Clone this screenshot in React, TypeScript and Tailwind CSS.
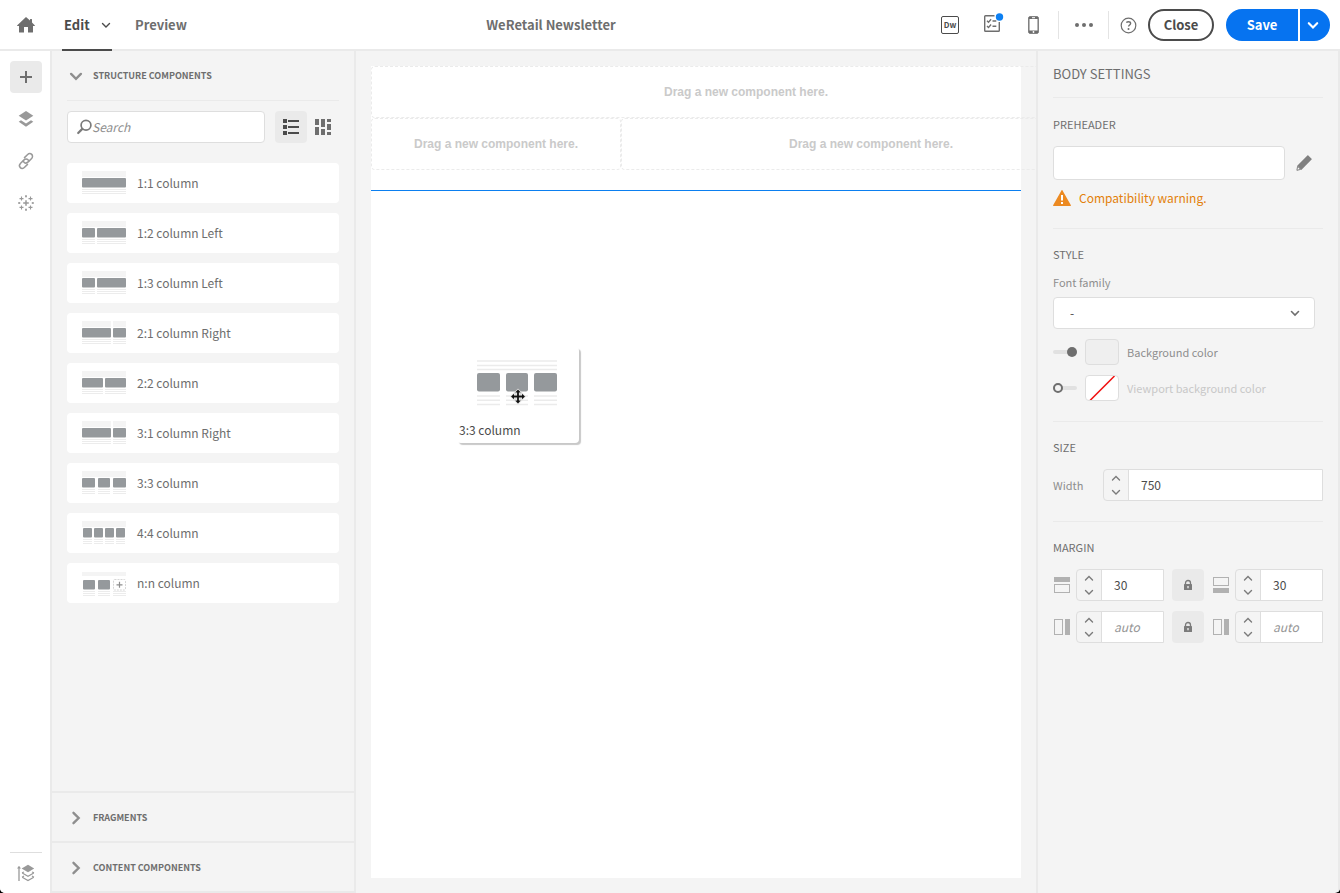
import React, { useState } from "react";

function Chevron({ dir, size = 10, stroke = 2 }: { dir: "up" | "down" | "right"; size?: number; stroke?: number }) {
  const d = { up: "M1.5 7 5 3.5 8.5 7", down: "M1.5 3.5 5 7 8.5 3.5", right: "M3.2 1.3 6.9 5 3.2 8.7" }[dir];
  return (
    <svg width={size} height={size} viewBox="0 0 10 10" fill="none" stroke="currentColor" strokeWidth={stroke} strokeLinecap="round" strokeLinejoin="miter" aria-hidden="true">
      <path d={d} />
    </svg>
  );
}

const HomeIcon = () => (
  <svg width="18" height="16" viewBox="0 0 18 16" fill="#6e6e6e" aria-hidden="true">
    <path d="M9 0 .3 8.2c-.4.4-.2.9.3.9H2V15c0 .4.2.6.6.6H7V10.4c0-.3.2-.4.4-.4h3.200c.3 0 .4.2.4.4v5.200h4.400c.4 0 .6-.2.6-.6V9.100h1.400c.5 0 .7-.5.3-.9L15 5.500V2.600c0-.4-.2-.6-.5-.6h-1c-.3 0-.5.2-.5.6v1z" />
  </svg>
);

const LayersIcon = () => (
  <svg width="16" height="16" viewBox="0 0 16 16" fill="#999" aria-hidden="true">
    <path d="M8 0 15.300 4.700 8 9.600.7 4.700z" />
    <path d="M.7 10.700 3 9.200l5 3.300 5-3.300 2.300 1.500L8 15.800z" />
  </svg>
);

const LinkIcon = () => (
  <svg width="18" height="18" viewBox="0 0 18 18" fill="none" stroke="#999" strokeWidth="1.5" strokeLinecap="round" aria-hidden="true">
    <path d="M7.500 5.600 10.400 2.700c1.400-1.400 3.200-1.400 4.300-.3s1.100 2.900-.3 4.300L11.200 9.900c-1.400 1.400-3.200 1.300-4.200.3-.4-.4-.6-.8-.7-1.300" />
    <path d="M10.500 12.400 7.600 15.300c-1.400 1.400-3.200 1.400-4.300.3s-1.100-2.900.3-4.300L6.800 8.100C8.200 6.700 10 6.800 11 7.800c.4.4.6.8.7 1.300" />
  </svg>
);

const DataIcon = () => (
  <svg width="16" height="16" viewBox="0 0 16 16" fill="none" stroke="#999" strokeWidth="1.1" aria-hidden="true">
    <path d="M8 5.200v5.600M5.200 8h5.600" strokeWidth="1.500" />
    <path d="M3.500 1.600v4M1.500 3.600h4M12.500 1.600v4M10.500 3.600h4M3.500 10.400v4M1.500 12.400h4M12.500 10.400v4M10.500 12.400h4" />
    <path d="M8 0v2.400M7 1.200h2M8 13.600V16M7 14.800h2M0 8h2.400M1.200 7v2M13.600 8H16M14.800 7v2" />
  </svg>
);

const StackIcon = () => (
  <svg width="18" height="18" viewBox="0 0 18 18" aria-hidden="true">
    <path d="M2 3.500V17" fill="none" stroke="#999" strokeWidth="1.300" />
    <path d="M0 4.500 2 1.800l2 2.700z" fill="#999" />
    <path d="M11 .8 17.200 4.600 11 8.300 4.600 4.600z" fill="#999" />
    <path d="m5.200 9 5.800 3.200L16.800 9M5.200 13.200l5.800 3.400 5.800-3.400M5 8.800l2-.8M17 8.800l-2-.8M5 13.200l2-1.200M17 13.200l-2-1.200" fill="none" stroke="#999" strokeWidth="1.200" />
  </svg>
);

const SearchIcon = () => (
  <svg width="16" height="16" viewBox="0 0 16 16" fill="none" stroke="#7b7b7b" className="shrink-0" aria-hidden="true">
    <circle cx="10" cy="6.200" r="4.900" strokeWidth="1.700" />
    <path d="M6.300 9.900 2.200 14" strokeWidth="2.200" strokeLinecap="round" />
  </svg>
);

const ListIcon = () => (
  <svg width="16" height="16" viewBox="0 0 16 16" fill="#4b4b4b" aria-hidden="true">
    <path d="M0 0h4v4H0zM0 6h4v4H0zM0 12h4v4H0zM5 1h11v2H5zM5 7h11v2H5zM5 13h11v2H5z" />
  </svg>
);

const CardsIcon = () => (
  <svg width="16" height="16" viewBox="0 0 16 16" fill="#6e6e6e" aria-hidden="true">
    <path d="M0 0h4v6H0zM0 8h4v8H0zM6 0h4v8H6zM6 10h4v6H6zM12 0h4v3h-4zM12 5h4v6h-4zM12 13h4v3h-4z" />
  </svg>
);

const TasksIcon = () => (
  <svg width="24" height="20" viewBox="0 0 24 20" fill="none" stroke="#6e6e6e" aria-hidden="true">
    <path d="M14.500 2.700H5.500a.8.8 0 0 0-.8.8v14c0 .4.4.8.800.8h13c.4 0 .8-.4.8-.8V9" strokeWidth="1.400" />
    <path d="m7 7.800 1.500 1.500 2.600-3M7 13l1.500 1.500 2.600-3" strokeWidth="1.300" />
    <path d="M12.500 8h3.800M12.500 13.200h3.800" strokeWidth="1.500" />
    <circle cx="19.500" cy="4" r="3.700" fill="#0d80f2" stroke="none" />
  </svg>
);

const PhoneIcon = () => (
  <svg width="12" height="18" viewBox="0 0 12 18" aria-hidden="true">
    <rect x=".7" y=".7" width="9.600" height="16.600" rx="1" fill="#6e6e6e" stroke="#6e6e6e" />
    <rect x="1.500" y="3" width="8" height="11.500" fill="#fff" />
    <rect x="4" y="1.200" width="3" height="1" fill="#fff" />
    <circle cx="5.500" cy="16" r=".9" fill="#fff" />
  </svg>
);

const HelpIcon = () => (
  <svg width="17" height="17" viewBox="0 0 17 17" fill="none" stroke="#6e6e6e" aria-hidden="true">
    <circle cx="8.500" cy="8.500" r="7.300" strokeWidth="1.200" />
    <path d="M6.300 5.500c.6-.5 1.300-.8 2.100-.8 1.400 0 2.200.8 2.200 1.700 0 1.500-2 1.700-2 3.200" strokeWidth="1.400" />
    <circle cx="8.500" cy="11.900" r="1" fill="#6e6e6e" stroke="none" />
  </svg>
);

const PencilIcon = () => (
  <svg width="16" height="16" viewBox="0 0 16 16" aria-hidden="true">
    <path d="M12.300.4 15.600 3.700c.3.300.3.600 0 .9L5.300 14.900 1.200 10.700 11.400.4c.3-.3.6-.3.9 0z" fill="#808080" />
    <path d="M1.600 11.300 4.700 14.400.9 15.300z" fill="#f4f4f4" stroke="#808080" />
  </svg>
);

const WarningIcon = () => (
  <svg width="18" height="16" viewBox="0 0 18 16" aria-hidden="true">
    <path d="M9.400.3 17.900 15.300c.2.400 0 .7-.4.7H.5c-.4 0-.6-.3-.4-.7L8.600.3c.2-.4.600-.4.800 0z" fill="#ec8a22" />
    <path d="M8 5h2v5.500H8zM8 12h2v2H8z" fill="#fff" />
  </svg>
);

const LockIcon = () => (
  <svg width="10" height="12" viewBox="0 0 10 12" aria-hidden="true">
    <path d="M2.500 6V4a2.500 2.500 0 0 1 5 0v2" fill="none" stroke="#7b7b7b" strokeWidth="1.300" />
    <rect x="1" y="5" width="8" height="6" rx=".6" fill="#7b7b7b" />
    <path d="M4.300 7h1.400v2.200H4.300z" fill="#eaeaea" />
  </svg>
);

type Side = "top" | "bottom" | "left" | "right";

function SideIcon({ side }: { side: Side }) {
  const bar = side === "top" ? [0, 1, 16, 5] : side === "bottom" ? [0, 12, 16, 5] : [11, 1, 5, 16];
  const box = side === "top" ? [0.5, 8.5, 15, 8] : side === "bottom" ? [0.5, 1.5, 15, 8] : [0.5, 1.5, 8, 15];
  return (
    <svg width="16" height="18" viewBox="0 0 16 18" aria-hidden="true">
      <rect x={bar[0]} y={bar[1]} width={bar[2]} height={bar[3]} fill="#b1b1b1" />
      <rect x={box[0]} y={box[1]} width={box[2]} height={box[3]} fill="none" stroke="#b1b1b1" />
    </svg>
  );
}

type Block = [number, number];
type Structure = { label: string; blocks: Block[]; bands: Block[]; add?: boolean };

const FULL: Block[] = [[0, 44]];
const structures: Structure[] = [
  { label: "1:1 column", blocks: FULL, bands: FULL },
  { label: "1:2 column Left", blocks: [[0, 13], [15, 29]], bands: FULL },
  { label: "1:3 column Left", blocks: [[0, 13], [15, 29]], bands: FULL },
  { label: "2:1 column Right", blocks: [[0, 29], [31, 13]], bands: [[0, 29], [31, 13]] },
  { label: "2:2 column", blocks: [[0, 21], [23, 21]], bands: FULL },
  { label: "3:1 column Right", blocks: [[0, 29], [31, 13]], bands: [[0, 29], [31, 13]] },
  { label: "3:3 column", blocks: [[0, 13], [16, 12], [31, 13]], bands: FULL },
  { label: "4:4 column", blocks: [[1, 9], [12, 9], [23, 9], [34, 9]], bands: FULL },
  { label: "n:n column", blocks: [[1, 12], [16, 12]], bands: FULL, add: true },
];

function Thumb({ blocks, bands, add }: Structure) {
  const y = add ? 2 : 0;
  const feet: Block[] = add ? [...blocks, [31, 13]] : blocks;
  return (
    <svg width="44" height="26" viewBox="0 0 44 26" className="shrink-0" aria-hidden="true">
      {bands.map(([x, w]) => (
        <rect key={x} x={x} y={1 + y / 2} width={w} height={add ? 4 : 6} fill="#f4f4f4" />
      ))}
      {blocks.map(([x, w]) => (
        <rect key={x} x={x} y={8 + y} width={w} height="9.500" rx="1" fill="#95999c" />
      ))}
      {feet.map(([x, w]) => (
        <g key={x} fill="#ececec">
          <rect x={x} y={19 + y} width={w} height="1" />
          <rect x={x} y={21 + y} width={w} height="1" />
          <rect x={x} y={23 + y} width={w} height="1" />
        </g>
      ))}
      {add && (
        <g fill="none">
          <rect x="31.500" y="9.500" width="12" height="10.500" rx="1" stroke="#d6d6d6" strokeDasharray="2 1" />
          <path d="M37.500 11.800v6M34.500 14.800h6" stroke="#8e8e8e" strokeWidth="1.200" />
        </g>
      )}
    </svg>
  );
}

function CollapsedSection({ title }: { title: string }) {
  return (
    <section className="border-t-2 border-[#eaeaea]">
      <button type="button" aria-expanded="false" className="flex h-12 w-full items-center gap-2.5 pt-0.5 pl-[17px] text-left text-[#8e8e8e]">
        <Chevron dir="right" size={14} stroke={1.7} />
        <span className="text-[9px] leading-4 font-bold text-[#6e6e6e]">{title}</span>
      </button>
    </section>
  );
}

function NumberField({ label, value, placeholder }: { label: string; value?: string; placeholder?: string }) {
  return (
    <div className="flex h-8 min-w-0 flex-1 rounded-l border border-[#dedede] text-[#7b7b7b]">
      <div className="flex w-[25px] shrink-0 flex-col items-center justify-between border-r border-[#dedede] py-[3px]">
        <button type="button" aria-label={`Increase ${label}`}><Chevron dir="up" size={10} stroke={1.4} /></button>
        <button type="button" aria-label={`Decrease ${label}`}><Chevron dir="down" size={10} stroke={1.4} /></button>
      </div>
      <input
        aria-label={label}
        defaultValue={value}
        placeholder={placeholder}
        className="w-full min-w-0 bg-white px-3 text-[12px] leading-5 text-[#4b4b4b] placeholder:text-[#959595] placeholder:italic"
      />
    </div>
  );
}

function LockButton({ label }: { label: string }) {
  return (
    <button type="button" aria-label={label} className="mx-2 flex size-8 shrink-0 items-center justify-center rounded bg-[#eaeaea]">
      <LockIcon />
    </button>
  );
}

function ColorRow({ label, enabled }: { label: string; enabled: boolean }) {
  const [on, setOn] = useState(enabled);
  return (
    <div className="flex h-[26px] items-center">
      <label className="grid">
        <input type="checkbox" role="switch" aria-label={`Enable ${label}`} checked={on} onChange={() => setOn(!on)} className="col-start-1 row-start-1 h-3 w-6 appearance-none" />
        <svg width="24" height="12" viewBox="0 0 24 12" className="pointer-events-none col-start-1 row-start-1" aria-hidden="true">
          <rect y="4" width="24" height="4" rx="2" fill="#e1e1e1" />
          {on ? <circle cx="19" cy="6" r="5" fill="#6e6e6e" /> : <circle cx="5" cy="6" r="4" fill="#f4f4f4" stroke="#6e6e6e" strokeWidth="2" />}
        </svg>
      </label>
      <button type="button" aria-label={`Choose ${label}`} className={`ml-2 h-[26px] w-[34px] overflow-hidden rounded border border-[#dedede] ${enabled ? "bg-[#efefef]" : "bg-white"}`}>
        {!enabled && (
          <svg width="32" height="24" viewBox="0 0 32 24" aria-hidden="true">
            <path d="M4 24.500 28.500 0" stroke="#f01010" strokeWidth="1.500" />
          </svg>
        )}
      </button>
      <span className={`ml-2 text-[11px] leading-4 ${enabled ? "text-[#8e8e8e]" : "text-[#c8c8c8]"}`}>{label}</span>
    </div>
  );
}

function SectionTitle({ children }: { children: React.ReactNode }) {
  return <h3 className="text-[11px] leading-4 text-[#6e6e6e]">{children}</h3>;
}

function Dropzone({ className = "" }: { className?: string }) {
  return (
    <div className={`flex items-center justify-center rounded-sm border border-dashed border-[#ebebeb] font-['Liberation_Sans',sans-serif] text-[12px] leading-5 font-bold text-[#cacaca] ${className}`}>
      Drag a new component here.
    </div>
  );
}

function DragCard() {
  const cols = [[20, 23], [49, 22], [77, 23]];
  return (
    <div className="absolute top-[296px] left-[101px] flex h-[96px] w-[122px] flex-col rounded-sm bg-white shadow-[2px_2px_1px_#c8c8c8]">
      <svg width="122" height="73" viewBox="0 0 122 73" aria-hidden="true">
        <path d="M20 14h80M20 18.500h80M20 22.500h80" stroke="#ebebeb" strokeWidth="1.600" />
        {cols.map(([x, w]) => (
          <g key={x}>
            <rect x={x} y="26" width={w} height="18.500" rx="2" fill="#95999c" />
            <path d={`M${x} 49h${w}M${x} 53.200h${w}M${x} 57.500h${w}`} stroke="#ebebeb" strokeWidth="1.600" />
          </g>
        ))}
        <path d="m61 41.500 8 8-8 8-8-8z" fill="#d8d8d8" />
        <path
          d="m61 42.500 2.800 3h-1.900v3.100H65v-1.900l3 2.800-3 2.800v-1.900h-3.100v3.100h1.900l-2.800 3-2.800-3h1.900v-3.100H57v1.900l-3-2.800 3-2.800v1.900h3.100v-3.100h-1.900z"
          fill="#111"
          stroke="#fff"
          strokeWidth=".8"
          paintOrder="stroke"
        />
      </svg>
      <span className="pl-0.5 text-[12px] leading-5 text-[#4b4b4b]">3:3 column</span>
    </div>
  );
}

function Header() {
  return (
    <header className="flex h-[51px] shrink-0 border-b-2 border-[#eaeaea] bg-white pr-2.5">
      <div className="flex items-center">
        <a href="#home" aria-label="Home" className="flex w-[62px] pl-[17px]"><HomeIcon /></a>
        <nav className="-mb-0.5 flex self-stretch text-[13px] leading-5 font-bold">
          <button type="button" className="flex w-[50px] items-center justify-between border-b-2 border-[#4b4b4b] px-px pl-0.5 text-[#4b4b4b]">
            Edit
            <Chevron dir="down" size={10} stroke={1.4} />
          </button>
          <a href="#preview" className="ml-[23px] flex items-center border-b-2 border-transparent text-[#6e6e6e]">Preview</a>
        </nav>
      </div>
      <h1 className="flex flex-1 items-center justify-center text-[13px] leading-5 font-bold text-[#6e6e6e]">WeRetail Newsletter</h1>
      <div className="flex items-center pl-3.5">
        <button type="button" aria-label="Dreamweaver" className="flex w-[42px] justify-center">
          <span className="flex h-[18px] w-[18px] items-center justify-center rounded-xs border border-[#4b4b4b] text-[8px] leading-3 font-bold text-[#4b4b4b]">Dw</span>
        </button>
        <button type="button" aria-label="Tasks" className="flex w-[42px] justify-center pb-1"><TasksIcon /></button>
        <button type="button" aria-label="Mobile view" className="flex w-[42px] justify-center"><PhoneIcon /></button>
        <button type="button" aria-label="More" className="ml-[3px] flex h-7 w-[51px] items-center justify-center gap-[3px] border-x border-[#e4e4e4]">
          <span className="size-1 rounded-full bg-[#6e6e6e]" />
          <span className="size-1 rounded-full bg-[#6e6e6e]" />
          <span className="size-1 rounded-full bg-[#6e6e6e]" />
        </button>
        <button type="button" aria-label="Help" className="flex w-[39px] justify-center pt-0.5"><HelpIcon /></button>
        <button type="button" className="h-8 w-[66px] rounded-full border-2 border-[#4b4b4b] text-[13px] leading-5 font-bold text-[#4b4b4b]">Close</button>
        <button type="button" className="ml-3 h-8 w-[72px] rounded-l-full bg-[#0673f0] text-[13px] leading-5 font-bold text-white">Save</button>
        <button type="button" aria-label="More save options" className="ml-0.5 flex h-8 w-[30px] items-center rounded-r-full bg-[#0673f0] pl-[7px] text-white">
          <Chevron dir="down" size={12} stroke={1.8} />
        </button>
      </div>
    </header>
  );
}

function Rail() {
  return (
    <nav aria-label="Panels" className="flex w-[52px] shrink-0 flex-col items-start gap-2.5 border-r-2 border-[#eaeaea] bg-white pt-2.5 pl-2.5">
      <button type="button" aria-label="Components" className="flex size-8 items-center justify-center rounded bg-[#eaeaea]">
        <svg width="12" height="12" viewBox="0 0 12 12" aria-hidden="true"><path d="M5 0h2v5h5v2H7v5H5V7H0V5h5z" fill="#6e6e6e" /></svg>
      </button>
      <button type="button" aria-label="Structure" className="flex size-8 items-center justify-center"><LayersIcon /></button>
      <button type="button" aria-label="Links" className="flex size-8 items-center justify-center"><LinkIcon /></button>
      <button type="button" aria-label="Data" className="flex size-8 items-center justify-center"><DataIcon /></button>
      <div className="mt-auto w-8 border-t border-[#dedede] pt-2.5 pb-2.5">
        <button type="button" aria-label="Layer tree" className="flex h-5 w-full items-center justify-center"><StackIcon /></button>
      </div>
    </nav>
  );
}

function ComponentsPanel() {
  return (
    <aside className="flex w-[304px] shrink-0 flex-col border-r-2 border-b-2 border-[#eaeaea]">
      <section className="flex-1 px-[15px]">
        <button type="button" aria-expanded="true" className="flex h-[50px] w-full items-center gap-2.5 border-b border-[#eaeaea] pl-0.5 text-[#8e8e8e]">
          <Chevron dir="down" size={14} stroke={1.7} />
          <span className="text-[9px] leading-4 font-bold text-[#6e6e6e]">STRUCTURE COMPONENTS</span>
        </button>
        <div className="mt-2.5 flex">
          <label className="mr-2.5 flex h-8 min-w-0 flex-1 items-center rounded border border-[#dedede] bg-white pl-2">
            <SearchIcon />
            <input type="search" aria-label="Search" placeholder="Search" className="w-full min-w-0 text-[12px] leading-5 text-[#4b4b4b] outline-none placeholder:text-[#8e8e8e] placeholder:italic" />
          </label>
          <button type="button" aria-label="List view" className="flex size-8 items-center justify-center rounded bg-[#eaeaea]"><ListIcon /></button>
          <button type="button" aria-label="Card view" className="flex size-8 items-center justify-center rounded"><CardsIcon /></button>
        </div>
        <ul className="mt-5 flex flex-col gap-2.5">
          {structures.map((s) => (
            <li key={s.label} className="flex h-10 items-center gap-[11px] rounded bg-white pl-[15px] text-[12px] leading-5 text-[#6e6e6e]">
              <Thumb {...s} />
              {s.label}
            </li>
          ))}
        </ul>
      </section>
      <CollapsedSection title="FRAGMENTS" />
      <CollapsedSection title="CONTENT COMPONENTS" />
    </aside>
  );
}

function Canvas() {
  return (
    <main className="relative flex min-w-0 flex-1 flex-col overflow-hidden p-[15px]">
      <div className="flex-1 bg-white">
        <div className="flex w-[750px] flex-col">
          <Dropzone className="h-[52px]" />
          <div className="flex">
            <Dropzone className="h-[52px] w-1/3" />
            <Dropzone className="h-[52px] w-2/3" />
          </div>
        </div>
        <hr className="mt-5 border-[#0b7ff0]" />
      </div>
      <DragCard />
    </main>
  );
}

function SettingsPanel() {
  return (
    <aside className="w-[304px] shrink-0 border-x-2 border-[#eaeaea] px-[15px]">
      <h2 className="border-b border-[#eaeaea] py-[13px] text-[13px] leading-5 text-[#6e6e6e]">BODY SETTINGS</h2>

      <section className="border-b border-[#eaeaea] pt-[18px] pb-5">
        <SectionTitle>PREHEADER</SectionTitle>
        <div className="mt-3.5 flex items-center">
          <input aria-label="Preheader" className="h-[34px] min-w-0 flex-1 rounded border border-[#dedede] bg-white px-3 text-[12px] leading-5" />
          <button type="button" aria-label="Edit preheader" className="mx-[11px]"><PencilIcon /></button>
        </div>
        <p className="mt-2 flex items-center gap-2 text-[12px] leading-5 text-[#e37f0a]">
          <WarningIcon />
          Compatibility warning.
        </p>
      </section>

      <section className="border-b border-[#eaeaea] pt-[17px] pb-5">
        <SectionTitle>STYLE</SectionTitle>
        <label htmlFor="font" className="mt-3 block text-[11px] leading-4 text-[#8e8e8e]">Font family</label>
        <div className="mt-[7px] mr-2 grid items-center text-[#6e6e6e]">
          <select id="font" className="col-start-1 row-start-1 h-8 w-full appearance-none rounded border border-[#dedede] bg-white px-4 text-[12px] leading-5 text-[#4b4b4b]">
            <option>-</option>
          </select>
          <span className="pointer-events-none col-start-1 row-start-1 mr-[15px] justify-self-end"><Chevron dir="down" size={10} stroke={1.6} /></span>
        </div>
        <div className="mt-2.5 flex flex-col gap-2.5">
          <ColorRow label="Background color" enabled />
          <ColorRow label="Viewport background color" enabled={false} />
        </div>
      </section>

      <section className="border-b border-[#eaeaea] pt-[17px] pb-5">
        <SectionTitle>SIZE</SectionTitle>
        <div className="mt-3.5 flex items-center">
          <span className="w-[50px] text-[11px] leading-4 text-[#8e8e8e]">Width</span>
          <NumberField label="Width" value="750" />
        </div>
      </section>

      <section className="pt-[17px]">
        <SectionTitle>MARGIN</SectionTitle>
        <div className="mt-3.5 flex flex-col gap-2.5">
          <div className="flex items-center">
            <span className="mr-1.5 ml-px"><SideIcon side="top" /></span>
            <NumberField label="Top margin" value="30" />
            <LockButton label="Lock vertical margins" />
            <span className="mr-1.5 ml-px"><SideIcon side="bottom" /></span>
            <NumberField label="Bottom margin" value="30" />
          </div>
          <div className="flex items-center">
            <span className="mr-1.5 ml-px"><SideIcon side="left" /></span>
            <NumberField label="Left margin" placeholder="auto" />
            <LockButton label="Lock horizontal margins" />
            <span className="mr-1.5 ml-px"><SideIcon side="right" /></span>
            <NumberField label="Right margin" placeholder="auto" />
          </div>
        </div>
      </section>
    </aside>
  );
}

export default function App() {
  return (
    <div className="min-h-screen bg-black font-['Noto_Sans_CJK_SC',sans-serif]">
      <div className="flex min-h-screen flex-col overflow-hidden rounded-b-[5px] bg-[#f4f4f4]">
        <Header />
        <div className="flex flex-1">
          <Rail />
          <ComponentsPanel />
          <Canvas />
          <SettingsPanel />
        </div>
      </div>
    </div>
  );
}
